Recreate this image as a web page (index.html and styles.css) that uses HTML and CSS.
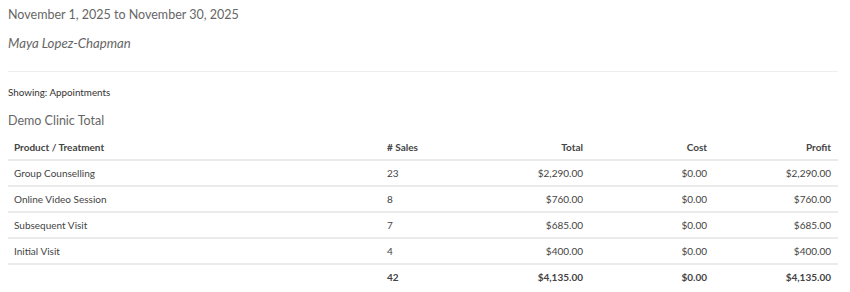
FILE: index.html
```html
<!DOCTYPE html>
<html>
<head>
<meta charset="utf-8">
<link rel="stylesheet" href="styles.css">
</head>
<body>
<div class="report">
  <h2 class="range">November 1, 2025 to November 30, 2025</h2>
  <p class="who">Maya Lopez-Chapman</p>
  <hr class="sep">
  <p class="showing">Showing: Appointments</p>
  <h3 class="clinic">Demo Clinic Total</h3>
  <table class="sales">
    <colgroup>
      <col class="c-name">
      <col class="c-count">
      <col class="c-money">
      <col class="c-money">
      <col class="c-money">
    </colgroup>
    <thead>
      <tr>
        <th>Product / Treatment</th>
        <th>#&nbsp;Sales</th>
        <th class="num">Total</th>
        <th class="num">Cost</th>
        <th class="num">Profit</th>
      </tr>
    </thead>
    <tbody>
      <tr><td>Group Counselling</td><td>23</td><td class="num">$2,290.00</td><td class="num">$0.00</td><td class="num">$2,290.00</td></tr>
      <tr><td>Online Video Session</td><td>8</td><td class="num">$760.00</td><td class="num">$0.00</td><td class="num">$760.00</td></tr>
      <tr><td>Subsequent Visit</td><td>7</td><td class="num">$685.00</td><td class="num">$0.00</td><td class="num">$685.00</td></tr>
      <tr><td>Initial Visit</td><td>4</td><td class="num">$400.00</td><td class="num">$0.00</td><td class="num">$400.00</td></tr>
    </tbody>
    <tfoot>
      <tr><td></td><td>42</td><td class="num">$4,135.00</td><td class="num">$0.00</td><td class="num">$4,135.00</td></tr>
    </tfoot>
  </table>
</div>
</body>
</html>
```
FILE: styles.css
```css
body {
  margin: 0;
  background: #fff;
  font-family: Lato, "Open Sans", sans-serif;
  color: #555;
}
.report {
  padding: 0 12px 0 8px;
}
.range {
  margin: 0;
  padding-top: 6px;
  font-size: 12.5px;
  font-weight: 400;
  line-height: 18px;
  color: #666;
}
.who {
  margin: 10px 0 0;
  font-size: 13.2px;
  font-style: italic;
  line-height: 18px;
  color: #666;
}
.sep {
  margin: 19px 0 0;
  border: 0;
  border-top: 1px solid #eee;
}
.showing {
  margin: 14px 0 0;
  font-size: 9.8px;
  line-height: 12px;
  color: #333;
}
.clinic {
  margin: 15px 0 0;
  font-size: 12.5px;
  font-weight: 400;
  line-height: 16px;
  color: #666;
}
.sales {
  width: 830px;
  table-layout: fixed;
  margin-top: 6px;
  border-collapse: collapse;
  font-size: 10px;
  color: #444;
}
.c-name { width: 373px; }
.c-count { width: 85px; }
.c-money { width: 124px; }
.sales th,
.sales td {
  padding: 0 7px 0 6px;
  height: 24px;
  text-align: left;
  white-space: nowrap;
}
.sales th {
  font-weight: 700;
  color: #444;
  border-bottom: 2px solid #eaeaea;
}
.sales tbody td {
  border-bottom: 2px solid #ebebeb;
}
.sales tfoot td {
  font-weight: 700;
}
.sales .num { text-align: right; }
```
